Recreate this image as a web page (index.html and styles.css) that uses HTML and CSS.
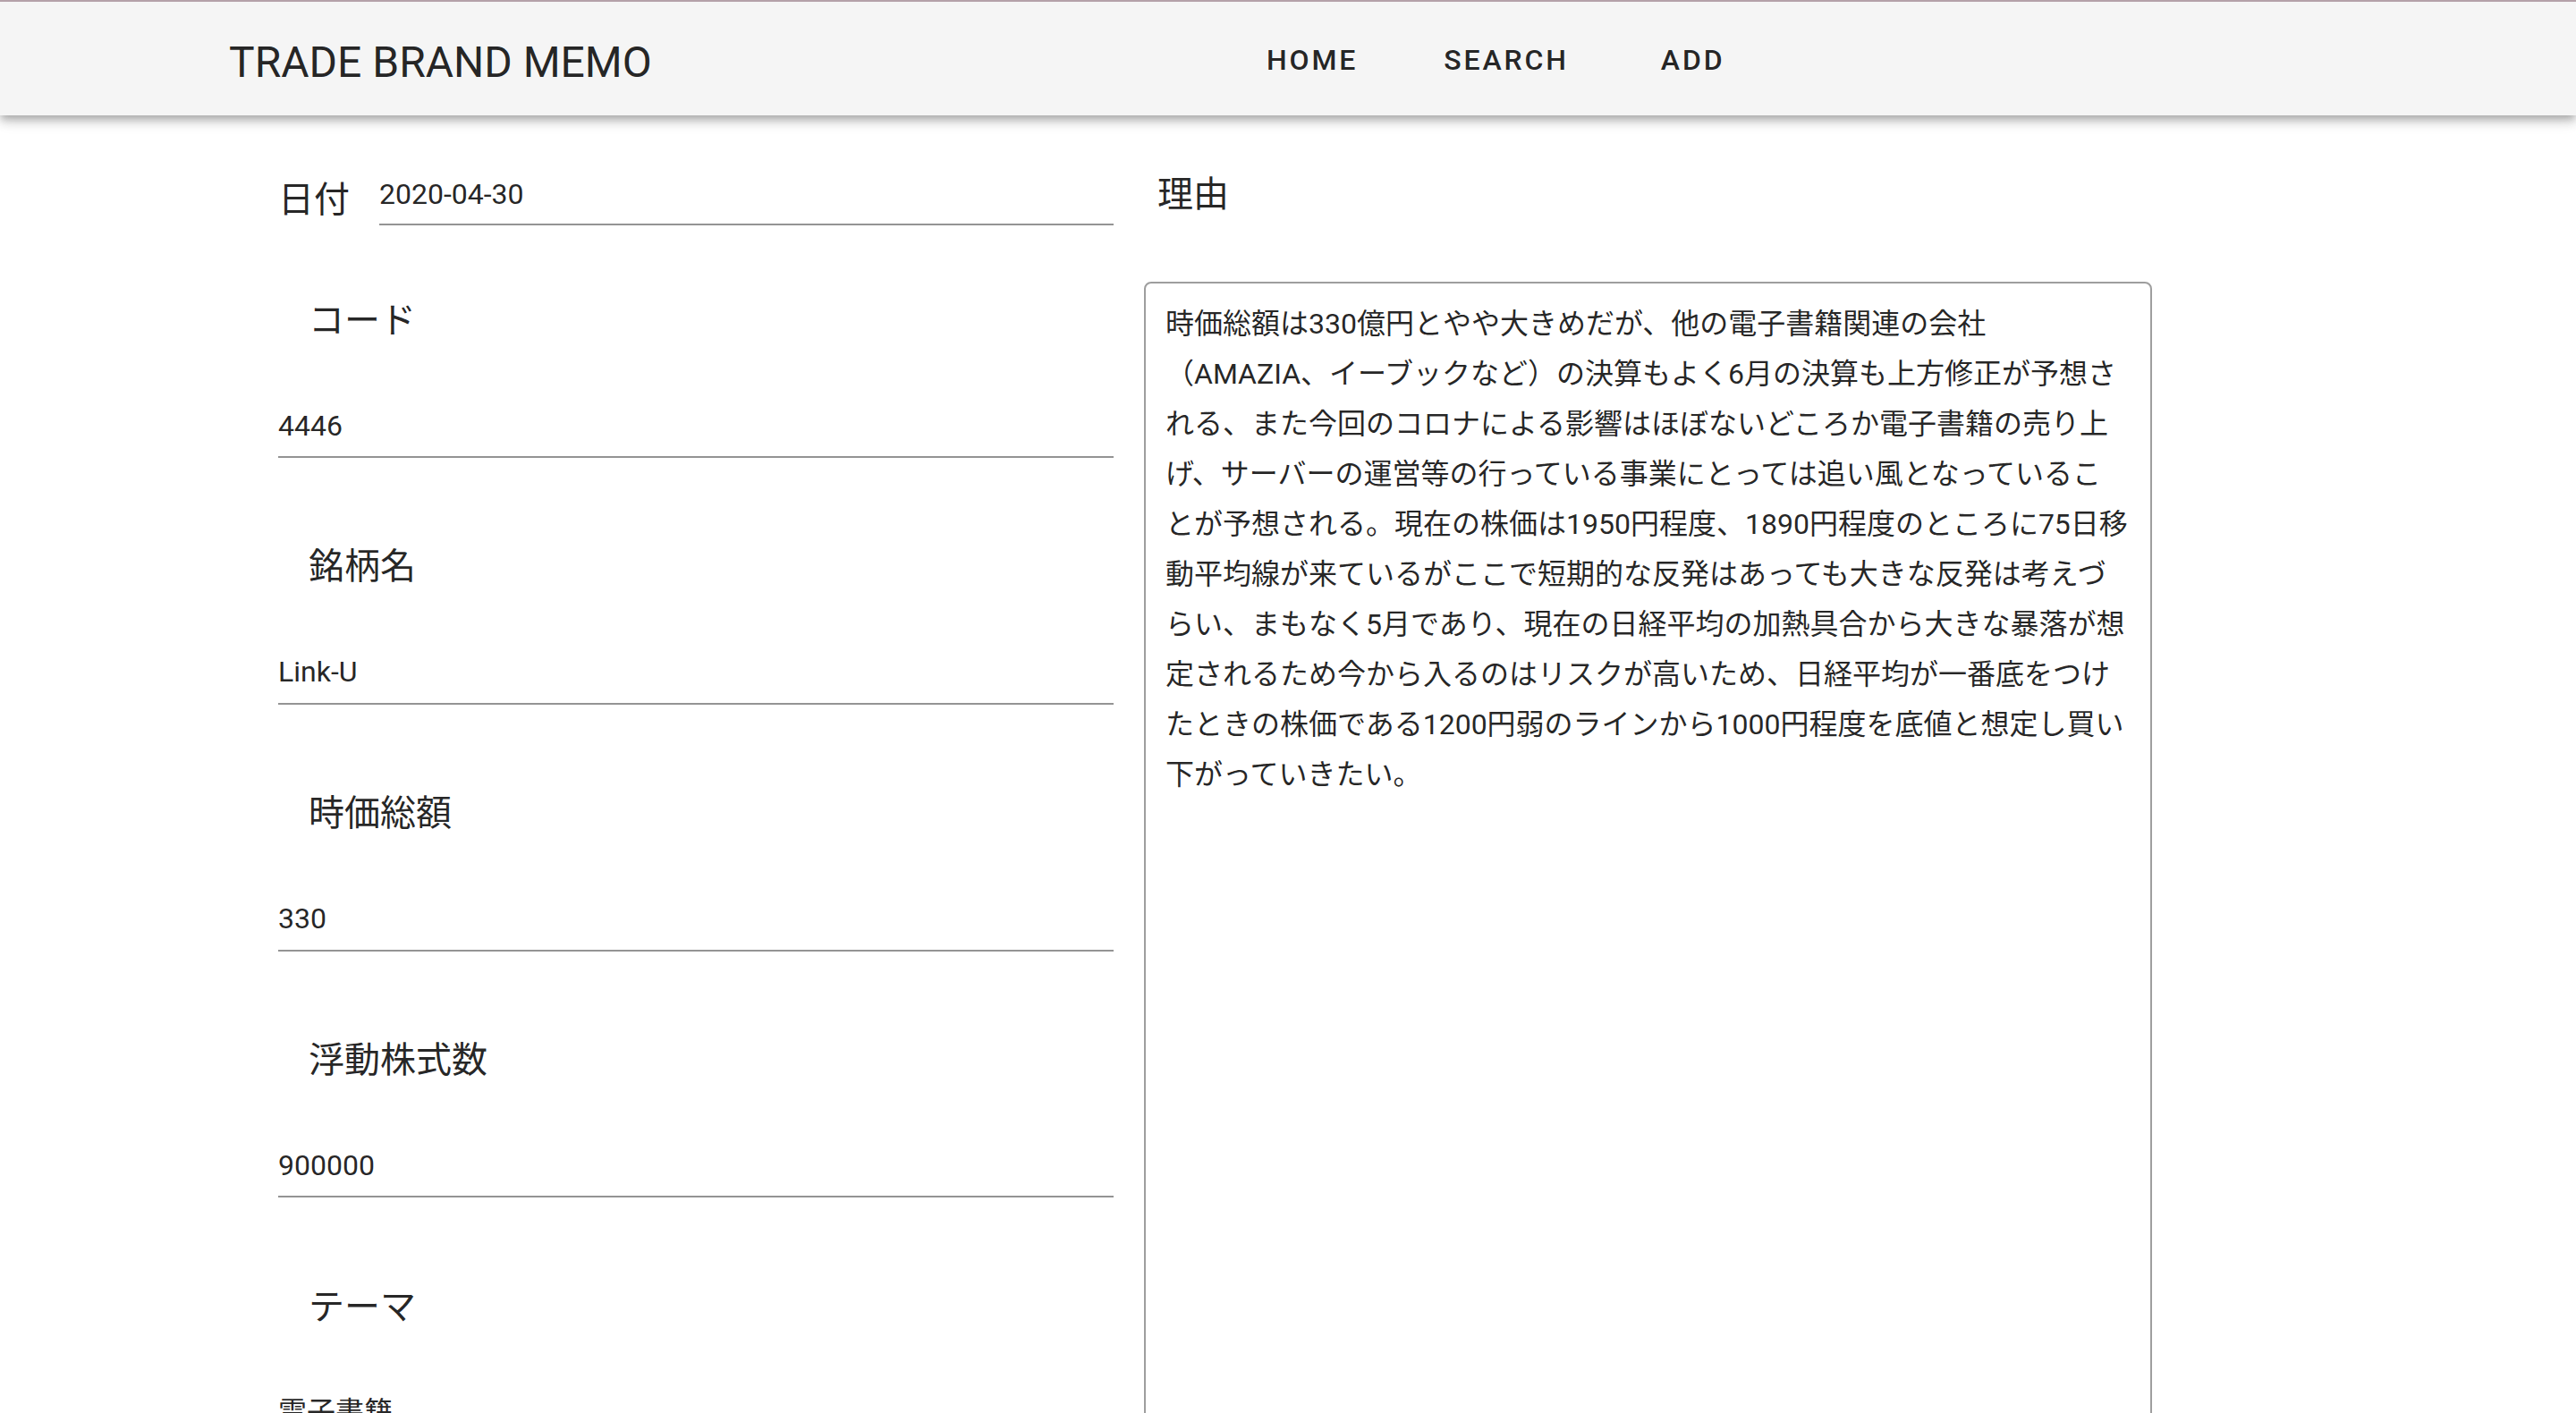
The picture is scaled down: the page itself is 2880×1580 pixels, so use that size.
FILE: index.html
```html
<!DOCTYPE html>
<html lang="ja">
<head>
<meta charset="utf-8">
<title>TRADE BRAND MEMO</title>
<link rel="stylesheet" href="styles.css">
</head>
<body>
<header class="app-bar">
  <div class="app-title">TRADE BRAND MEMO</div>
  <nav class="nav">
    <a class="nav-btn">Home</a>
    <a class="nav-btn">Search</a>
    <a class="nav-btn nav-btn-last">Add</a>
  </nav>
</header>
<main class="page">
  <section class="col-left">
    <div class="date-row">
      <div class="date-label">日付</div>
      <div class="field date-field">2020-04-30</div>
    </div>
    <div class="group group-first">
      <div class="group-label">コード</div>
      <div class="field">4446</div>
    </div>
    <div class="group">
      <div class="group-label">銘柄名</div>
      <div class="field">Link-U</div>
    </div>
    <div class="group">
      <div class="group-label">時価総額</div>
      <div class="field">330</div>
    </div>
    <div class="group">
      <div class="group-label">浮動株式数</div>
      <div class="field">900000</div>
    </div>
    <div class="group">
      <div class="group-label">テーマ</div>
      <div class="field">電子書籍</div>
    </div>
  </section>
  <section class="col-right">
    <div class="reason-label">理由</div>
    <div class="textarea" role="textbox" aria-multiline="true">
      <div class="line">時価総額は330億円とやや大きめだが、他の電子書籍関連の会社</div>
      <div class="line">（AMAZIA、イーブックなど）の決算もよく6月の決算も上方修正が予想さ</div>
      <div class="line">れる、また今回のコロナによる影響はほぼないどころか電子書籍の売り上</div>
      <div class="line">げ、サーバーの運営等の行っている事業にとっては追い風となっているこ</div>
      <div class="line">とが予想される。現在の株価は1950円程度、1890円程度のところに75日移</div>
      <div class="line">動平均線が来ているがここで短期的な反発はあっても大きな反発は考えづ</div>
      <div class="line">らい、まもなく5月であり、現在の日経平均の加熱具合から大きな暴落が想</div>
      <div class="line">定されるため今から入るのはリスクが高いため、日経平均が一番底をつけ</div>
      <div class="line">たときの株価である1200円弱のラインから1000円程度を底値と想定し買い</div>
      <div class="line">下がっていきたい。</div>
    </div>
  </section>
</main>
</body>
</html>
```

FILE: styles.css
```css
* {
  box-sizing: border-box;
}

html,
body {
  margin: 0;
  height: 100%;
  overflow: hidden;
  background: #ffffff;
}

body {
  font-family: Roboto, "Noto Sans CJK JP", sans-serif;
  color: rgba(0, 0, 0, 0.87);
}

.app-bar {
  position: relative;
  z-index: 2;
  display: flex;
  align-items: flex-start;
  height: 129px;
  padding-left: 256px;
  border-top: 2px solid #b5a1a9;
  background: #f5f5f5;
  box-shadow: 0 4px 8px -2px rgba(0, 0, 0, 0.2),
              0 8px 10px 0 rgba(0, 0, 0, 0.14),
              0 2px 20px 0 rgba(0, 0, 0, 0.12);
}

.app-title {
  flex: 0 0 1160px;
  margin-top: 40px;
  font-size: 48px;
  line-height: 55px;
  white-space: nowrap;
  color: rgba(0, 0, 0, 0.87);
}

.nav {
  display: flex;
  gap: 96px;
  margin-top: 46px;
}

.nav-btn {
  font-size: 32px;
  font-weight: 500;
  line-height: 38px;
  letter-spacing: 0.0892857em;
  text-transform: uppercase;
  color: rgba(0, 0, 0, 0.87);
  white-space: nowrap;
}

.nav-btn-last {
  margin-left: 7px;
}

.page {
  display: flex;
  align-items: flex-start;
  padding: 60px 0 0 311px;
}

.col-left {
  flex: 0 0 934px;
  padding-top: 8px;
}

.date-row {
  display: flex;
  align-items: flex-start;
}

.date-label {
  margin-top: 3px;
  margin-right: 33px;
  font-family: "Noto Sans CJK JP", sans-serif;
  font-size: 40px;
  line-height: 40px;
  white-space: nowrap;
}

.field {
  font-size: 32px;
  line-height: 40px;
  padding-bottom: 14.4px;
  border-bottom: 2px solid #949494;
  white-space: nowrap;
}

.date-field {
  flex: 1 1 auto;
  padding-bottom: 13px;
}

.group {
  margin-top: 90.3px;
}

.group-first {
  margin-top: 74.75px;
}

.group-label {
  padding-left: 34px;
  margin-bottom: 73px;
  font-family: "Noto Sans CJK JP", sans-serif;
  font-size: 40px;
  line-height: 56px;
  white-space: nowrap;
}

.col-right {
  flex: 0 0 1127px;
  margin-left: 34px;
}

.reason-label {
  padding-left: 15px;
  font-family: "Noto Sans CJK JP", sans-serif;
  font-size: 40px;
  line-height: 50px;
}

.textarea {
  margin-top: 76px;
  height: 1400px;
  padding: 17px 22px 0 22px;
  border: 2px solid #9e9e9e;
  border-radius: 8px;
  font-size: 32px;
  color: rgba(0, 0, 0, 0.87);
}

.line {
  height: 56px;
  line-height: 56px;
  white-space: nowrap;
}
```
